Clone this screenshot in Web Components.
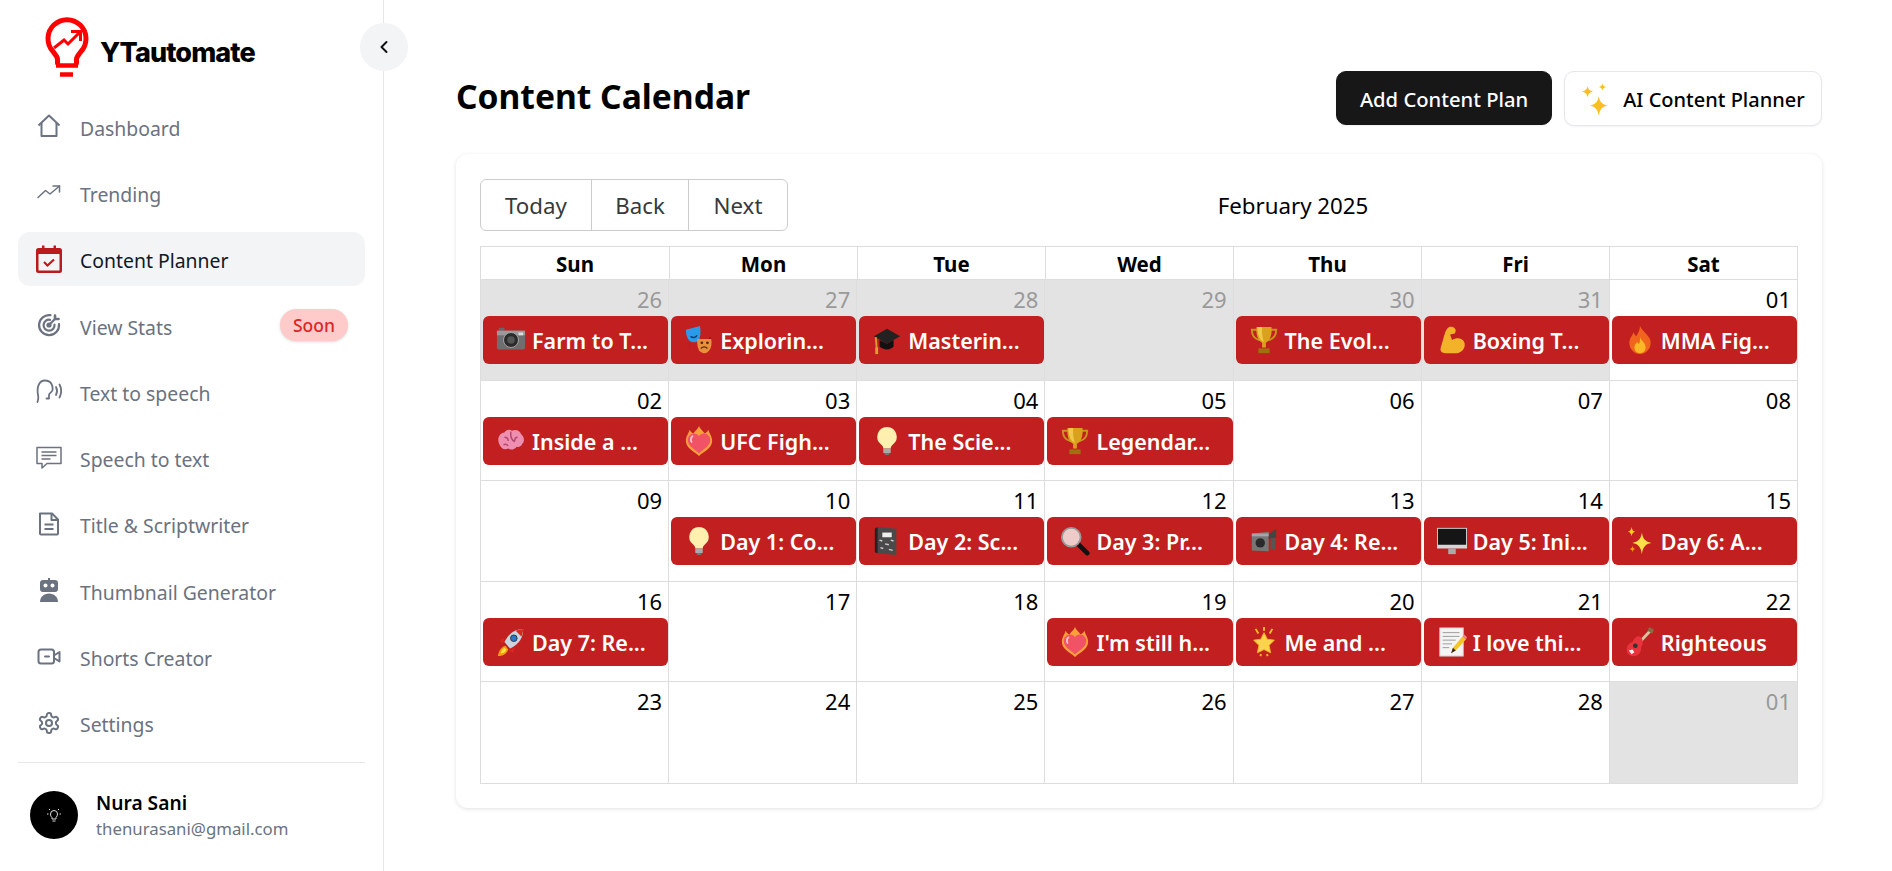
<!DOCTYPE html>
<html>
<head>
<meta charset="utf-8">
<title>Content Calendar</title>
<style>
html, body { margin: 0; height: 100%; background: #fff; }
body { font-family: "Noto Sans", "Open Sans", sans-serif; color: #000; overflow: hidden; }
</style>
</head>
<body>
<yt-app>
  <yt-sidebar slot="side">
    <yt-logo slot="logo">YTautomate</yt-logo>
    <nav-item>
      <svg slot="icon" viewBox="0 0 24 24" width="24" height="24" fill="none" stroke="currentColor" stroke-width="2" stroke-linejoin="round"><path d="M1.500 11.500 12 1.500l10.500 10"/><path d="M4.500 9v13h15V9"/></svg>
      Dashboard
    </nav-item>
    <nav-item>
      <svg slot="icon" viewBox="0 0 24 24" width="24" height="24" fill="none" stroke="currentColor" stroke-width="1.500" stroke-linejoin="round" stroke-linecap="round"><path d="M1 17.500 8.500 10.500l4.500 3.500 9.500-8"/><path d="M16 6h6.500v6"/></svg>
      Trending
    </nav-item>
    <nav-item active>
      <svg slot="icon" viewBox="0 0 26 30" width="26" height="30"><path fill="#b91c1c" d="M2.500 4H6V1.500h2.500V4h9V1.500H20V4h3.500A2.500 2.500 0 0 1 26 6.500v20a2.500 2.500 0 0 1-2.500 2.500h-21A2.500 2.500 0 0 1 0 26.500v-20A2.500 2.500 0 0 1 2.500 4z"/><rect x="2.500" y="10" width="21" height="16.500" rx=".5" fill="#f3f4f6"/><path d="M8 18l3.500 3.500L18 15.500" fill="none" stroke="#b91c1c" stroke-width="2.200"/></svg>
      Content Planner
    </nav-item>
    <nav-item>
      <svg slot="icon" viewBox="0 0 24 24" width="24" height="24" fill="none" stroke="currentColor" stroke-width="2.200" stroke-linecap="round"><path d="M13.500 2.200A10 10 0 1 0 22 11"/><path d="M13 6.800A5.500 5.500 0 1 0 17.500 11.500"/><circle cx="12" cy="12" r="1.500"/><path d="M12 12l6-6"/><path d="M18 2.500v3.500h3.500" stroke-width="2.600"/></svg>
      View Stats
      <soon-badge slot="end">Soon</soon-badge>
    </nav-item>
    <nav-item>
      <svg slot="icon" viewBox="0 0 26 24" width="26" height="24" fill="none" stroke="currentColor" stroke-width="1.800" stroke-linecap="round"><path d="M1.500 23c.5-2.500 1.200-3.500.6-6.500C.6 9 2.500 1.500 9 1.500s8 5.500 7.500 9.500c-.3 2.300-3.500 3-3.500 5v3"/><path d="M13 19.500h-2.500"/><path d="M20 8c1.300 2.500 1.300 5.500 0 8"/><path d="M23.500 5.500c2 3.800 2 9 0 13"/></svg>
      Text to speech
    </nav-item>
    <nav-item>
      <svg slot="icon" viewBox="0 0 26 24" width="26" height="24" fill="none" stroke="currentColor" stroke-width="1.500"><path d="M1 1.500h24v16H11l-5 4.500v-4.500H1z" stroke-linejoin="round"/><path d="M5.500 6h15M5.500 9.500h15M5.500 13h9"/></svg>
      Speech to text
    </nav-item>
    <nav-item>
      <svg slot="icon" viewBox="0 0 24 24" width="24" height="24" fill="none" stroke="currentColor" stroke-width="2" stroke-linejoin="round"><path d="M3 1.500h12l6 6v14a1 1 0 0 1-1 1H4a1 1 0 0 1-1-1z"/><path d="M14.500 1.500v6.500H21"/><path d="M7.500 12.500h9M7.500 17h9"/></svg>
      Title &amp; Scriptwriter
    </nav-item>
    <nav-item>
      <svg slot="icon" viewBox="0 0 24 24" width="24" height="24"><path fill="currentColor" d="M11 0h2v2h5a3 3 0 0 1 3 3v6a3 3 0 0 1-3 3H6a3 3 0 0 1-3-3V5a3 3 0 0 1 3-3h5z"/><circle cx="8.500" cy="7.500" r="2" fill="#fff"/><circle cx="15.500" cy="7.500" r="2" fill="#fff"/><path fill="currentColor" d="M3 24c0-5 4-8.500 9-8.500s9 3.500 9 8.500z"/></svg>
      Thumbnail Generator
    </nav-item>
    <nav-item>
      <svg slot="icon" viewBox="0 0 24 24" width="24" height="24" fill="none" stroke="currentColor" stroke-width="2" stroke-linejoin="round" stroke-linecap="round"><rect x="1.500" y="4.500" width="15.500" height="14" rx="2.500"/><path d="M17 10.500l5.500-3.500v9.500L17 13"/><path d="M8 11.500h4"/></svg>
      Shorts Creator
    </nav-item>
    <nav-item>
      <svg slot="icon" viewBox="0 0 24 24" width="24" height="24" fill="none" stroke="currentColor" stroke-width="2" stroke-linejoin="round" stroke-linecap="round"><path d="M12.220 2h-.44a2 2 0 0 0-2 2v.18a2 2 0 0 1-1 1.730l-.43.250a2 2 0 0 1-2 0l-.15-.08a2 2 0 0 0-2.730.730l-.22.380a2 2 0 0 0 .730 2.730l.15.100a2 2 0 0 1 1 1.720v.51a2 2 0 0 1-1 1.740l-.15.090a2 2 0 0 0-.730 2.730l.22.380a2 2 0 0 0 2.730.730l.15-.08a2 2 0 0 1 2 0l.43.250a2 2 0 0 1 1 1.730V20a2 2 0 0 0 2 2h.44a2 2 0 0 0 2-2v-.18a2 2 0 0 1 1-1.730l.43-.250a2 2 0 0 1 2 0l.15.080a2 2 0 0 0 2.730-.730l.22-.390a2 2 0 0 0-.730-2.730l-.15-.080a2 2 0 0 1-1-1.740v-.5a2 2 0 0 1 1-1.740l.15-.090a2 2 0 0 0 .730-2.730l-.22-.380a2 2 0 0 0-2.730-.730l-.15.080a2 2 0 0 1-2 0l-.43-.250a2 2 0 0 1-1-1.730V4a2 2 0 0 0-2-2z"/><circle cx="12" cy="12" r="3"/></svg>
      Settings
    </nav-item>
    <user-card slot="foot" name="Nura Sani" email="thenurasani@gmail.com"></user-card>
  </yt-sidebar>

  <page-header slot="head" title="Content Calendar">
    <yt-button variant="dark">Add Content Plan</yt-button>
    <yt-button>
      <svg slot="icon" viewBox="0 0 30 36" width="28" height="34" fill="#fbbf24"><path d="M18 10c1 6 4 9 10 10-6 1-9 4-10 11-1-7-4-10-10-11 6-1 9-4 10-10z" transform="translate(1 4)"/><path d="M7 3c.600 3.500 2.200 5.100 6 6-3.800.900-5.400 2.500-6 6-.600-3.500-2.200-5.100-6-6 3.800-.900 5.400-2.500 6-6z"/><path d="M23 0c.400 2.300 1.500 3.400 4 4-2.500.600-3.600 1.700-4 4-.400-2.300-1.500-3.400-4-4 2.500-.600 3.600-1.700 4-4z"/></svg>
      AI Content Planner
    </yt-button>
  </page-header>

  <cal-card slot="main">
    <cal-toolbar slot="toolbar" label="February 2025"></cal-toolbar>
    <cal-month>
      <cal-day n="26" off><cal-event e="camera">Farm to T...</cal-event></cal-day>
      <cal-day n="27" off><cal-event e="masks">Explorin...</cal-event></cal-day>
      <cal-day n="28" off><cal-event e="cap">Masterin...</cal-event></cal-day>
      <cal-day n="29" off></cal-day>
      <cal-day n="30" off><cal-event e="trophy">The Evol...</cal-event></cal-day>
      <cal-day n="31" off><cal-event e="muscle">Boxing T...</cal-event></cal-day>
      <cal-day n="01"><cal-event e="fire">MMA Fig...</cal-event></cal-day>

      <cal-day n="02"><cal-event e="brain">Inside a ...</cal-event></cal-day>
      <cal-day n="03"><cal-event e="heartfire">UFC Figh...</cal-event></cal-day>
      <cal-day n="04"><cal-event e="bulb">The Scie...</cal-event></cal-day>
      <cal-day n="05"><cal-event e="trophy">Legendar...</cal-event></cal-day>
      <cal-day n="06"></cal-day>
      <cal-day n="07"></cal-day>
      <cal-day n="08"></cal-day>

      <cal-day n="09"></cal-day>
      <cal-day n="10"><cal-event e="bulb">Day 1: Co...</cal-event></cal-day>
      <cal-day n="11"><cal-event e="notebook">Day 2: Sc...</cal-event></cal-day>
      <cal-day n="12"><cal-event e="search">Day 3: Pr...</cal-event></cal-day>
      <cal-day n="13"><cal-event e="video">Day 4: Re...</cal-event></cal-day>
      <cal-day n="14"><cal-event e="desktop">Day 5: Ini...</cal-event></cal-day>
      <cal-day n="15"><cal-event e="sparkles">Day 6: A...</cal-event></cal-day>

      <cal-day n="16"><cal-event e="rocket">Day 7: Re...</cal-event></cal-day>
      <cal-day n="17"></cal-day>
      <cal-day n="18"></cal-day>
      <cal-day n="19"><cal-event e="heartfire">I'm still h...</cal-event></cal-day>
      <cal-day n="20"><cal-event e="star">Me and ...</cal-event></cal-day>
      <cal-day n="21"><cal-event e="memo">I love thi...</cal-event></cal-day>
      <cal-day n="22"><cal-event e="guitar">Righteous</cal-event></cal-day>

      <cal-day n="23"></cal-day>
      <cal-day n="24"></cal-day>
      <cal-day n="25"></cal-day>
      <cal-day n="26"></cal-day>
      <cal-day n="27"></cal-day>
      <cal-day n="28"></cal-day>
      <cal-day n="01" off></cal-day>
    </cal-month>
  </cal-card>
</yt-app>

<script>
const tpl = html => {
  const t = document.createElement('template')
  t.innerHTML = html
  return t
}

// base class: clones a template into an open shadow root
class Base extends HTMLElement {
  constructor() {
    super()
    this.attachShadow({ mode: 'open' }).appendChild(this.constructor.template.content.cloneNode(true))
  }
}

class YtApp extends Base {
  static template = tpl(`
  <style>
    :host { display: flex; height: 871px; }
    .page { flex: 1; min-width: 0; padding: 71px 70px 0 72px; }
  </style>
  <slot name="side"></slot>
  <div class="page">
    <slot name="head"></slot>
    <slot name="main"></slot>
  </div>`)
}
customElements.define('yt-app', YtApp)

class YtSidebar extends Base {
  static template = tpl(`
  <style>
    :host { display: flex; flex-direction: column; position: relative; box-sizing: border-box; width: 384px; height: 871px; border-right: 1px solid #e5e7eb; padding: 0 18px; flex: none; }
    .collapse { position: absolute; top: 23px; right: -25px; width: 48px; height: 48px; border-radius: 50%; background: #f3f4f6; display: flex; align-items: center; justify-content: center; }
    nav { display: flex; flex-direction: column; gap: 12px; }
    .foot { margin-top: 12px; border-top: 1px solid #e5e7eb; }
  </style>
  <slot name="logo"></slot>
  <div class="collapse">
    <svg viewBox="0 0 24 24" width="24" height="24" fill="none" stroke="#111" stroke-width="2" stroke-linecap="round" stroke-linejoin="round"><path d="M14.500 7 9.500 12l5 5"/></svg>
  </div>
  <nav><slot></slot></nav>
  <div class="foot"><slot name="foot"></slot></div>`)
}
customElements.define('yt-sidebar', YtSidebar)

class YtLogo extends Base {
  static template = tpl(`
  <style>
    :host { display: flex; align-items: center; height: 99px; padding-left: 27px; box-sizing: border-box; gap: 11px; }
    svg { flex: none; margin-top: -4px; }
    span { font: 800 27px "Inter", "Noto Sans", sans-serif; letter-spacing: -.9px; color: #000; margin-top: 6px; }
  </style>
  <svg viewBox="0 0 44 62" width="44" height="62" fill="none" stroke="#f00">
    <path d="M12.500 45v-3.500c0-3-2-4.500-4.500-8A19 19 0 1 1 36 33.500c-2.500 3.500-4.500 5-4.500 8V45" stroke-width="5" stroke-linecap="round" transform="translate(0 1)"/>
    <path d="M9 31l10-8 4 4 11-11" stroke-width="3"/>
    <path d="M26 14.500h9.500V24" stroke-width="3"/>
    <path d="M11 48.500h22" stroke-width="4.500"/>
    <path d="M15 57.500h13" stroke-width="4.500"/>
  </svg>
  <span><slot></slot></span>`)
}
customElements.define('yt-logo', YtLogo)

class NavItem extends Base {
  static template = tpl(`
  <style>
    :host { display: flex; align-items: center; height: 54.300px; padding: 0 18px; box-sizing: border-box; border-radius: 12px; color: #6b7280; font-size: 19.400px; white-space: nowrap; }
    :host([active]) { background: #f3f4f6; color: #111827; }
    .icon { width: 26px; height: 30px; display: flex; align-items: center; justify-content: center; margin-right: 18px; flex: none; }
    .label { flex: 1; padding-top: 4px; }
  </style>
  <span class="icon"><slot name="icon"></slot></span>
  <span class="label"><slot></slot></span>
  <slot name="end"></slot>`)
}
customElements.define('nav-item', NavItem)

class SoonBadge extends Base {
  static template = tpl(`
  <style>
    :host { display: inline-flex; align-items: center; justify-content: center; height: 32px; width: 68px; margin-right: -1px; border-radius: 16px; background: #fecaca; color: #dc2626; font-size: 17.500px; font-weight: 500; box-shadow: 0 1px 3px rgba(0,0,0,.15); }
  </style>
  <slot></slot>`)
}
customElements.define('soon-badge', SoonBadge)

class UserCard extends Base {
  static template = tpl(`
  <style>
    :host { display: flex; align-items: center; gap: 18px; padding: 26px 12px 0; }
    .avatar { width: 48px; height: 48px; border-radius: 50%; background: #000; display: flex; align-items: center; justify-content: center; flex: none; }
    .name { font-size: 19.200px; font-weight: 600; line-height: 26px; color: #000; padding-top: 1px; }
    .email { font-size: 16.800px; line-height: 25px; color: #6b7280; }
  </style>
  <div class="avatar">
    <svg viewBox="0 0 14 16" width="14" height="16" fill="none" stroke="#ddd" stroke-width="1"><path d="M5 12v-1.500C4 9.500 3.500 8.500 3.500 7a3.500 3.500 0 0 1 7 0c0 1.500-.500 2.500-1.500 3.500V12z"/><path d="M5.500 14h3M0 7h1.500M12.500 7H14M2 2l1 1M12 2l-1 1" /></svg>
  </div>
  <div>
    <div class="name"></div>
    <div class="email"></div>
  </div>`)

  connectedCallback() {
    this.shadowRoot.querySelector('.name').textContent = this.getAttribute('name')
    this.shadowRoot.querySelector('.email').textContent = this.getAttribute('email')
  }
}
customElements.define('user-card', UserCard)

class PageHeader extends Base {
  static template = tpl(`
  <style>
    :host { display: flex; align-items: center; justify-content: space-between; height: 55px; margin-bottom: 28px; }
    h1 { margin: -5px 0 0; font-size: 33.600px; font-weight: 700; color: #000; }
    .actions { display: flex; gap: 12px; align-items: flex-start; }
  </style>
  <h1></h1>
  <div class="actions"><slot></slot></div>`)

  connectedCallback() {
    this.shadowRoot.querySelector('h1').textContent = this.getAttribute('title')
  }
}
customElements.define('page-header', PageHeader)

class YtButton extends Base {
  static template = tpl(`
  <style>
    :host { display: inline-flex; align-items: center; justify-content: center; box-sizing: border-box; height: 55px; width: 258px; gap: 14px; padding-top: 2px; border-radius: 10px; border: 1px solid #e5e7eb; background: #fff; color: #000; font-size: 20px; font-weight: 500; box-shadow: 0 1px 2px rgba(0,0,0,.06); white-space: nowrap; }
    :host([variant="dark"]) { width: 216px; background: #171717; border-color: #171717; color: #fff; font-size: 20.200px; height: 54px; }
  </style>
  <slot name="icon"></slot><slot></slot>`)
}
customElements.define('yt-button', YtButton)

class CalCard extends Base {
  static template = tpl(`
  <style>
    :host { display: block; background: #fff; border-radius: 12px; padding: 25px 24px; box-shadow: 0 1px 4px rgba(0,0,0,.12); height: 654px; box-sizing: border-box; }
  </style>
  <slot name="toolbar"></slot>
  <slot></slot>`)
}
customElements.define('cal-card', CalCard)

class CalToolbar extends Base {
  static template = tpl(`
  <style>
    :host { display: flex; align-items: center; height: 52px; margin-bottom: 15px; }
    .group { display: flex; flex: none; height: 52px; box-sizing: border-box; border: 1px solid #ccc; border-radius: 6px; color: #373a3c; font-size: 22.300px; }
    .group span { display: flex; align-items: center; justify-content: center; padding-top: 1px; }
    .group span + span { border-left: 1px solid #ccc; }
    .label { flex: 1; text-align: center; font-size: 22.300px; color: #000; padding-top: 1px; }
  </style>
  <div class="group"><span style="width:110px">Today</span><span style="width:96px">Back</span><span style="width:98px">Next</span></div>
  <div class="label"></div>`)

  connectedCallback() {
    this.shadowRoot.querySelector('.label').textContent = this.getAttribute('label')
  }
}
customElements.define('cal-toolbar', CalToolbar)

class CalMonth extends Base {
  static template = tpl(`
  <style>
    :host { display: block; }
    .grid { display: grid; grid-template-columns: repeat(7, 1fr); grid-auto-rows: 100.600px; border-right: 1px solid #ddd; border-bottom: 1px solid #ddd; box-sizing: border-box; }
    .heads { display: grid; grid-template-columns: repeat(7, 1fr); height: 34px; border: 1px solid #ddd; box-sizing: border-box; font-weight: 700; font-size: 20.500px; }
    .heads div { display: flex; align-items: center; justify-content: center; color: #000; padding-top: 1px; }
    .heads div + div { border-left: 1px solid #ddd; }
  </style>
  <div class="heads"><div>Sun</div><div>Mon</div><div>Tue</div><div>Wed</div><div>Thu</div><div>Fri</div><div>Sat</div></div>
  <div class="grid"><slot></slot></div>`)
}
customElements.define('cal-month', CalMonth)

class CalDay extends Base {
  static template = tpl(`
  <style>
    :host { display: block; box-sizing: border-box; min-width: 0; border-bottom: 1px solid #ddd; border-left: 1px solid #ddd; background: #fff; padding-top: 3px; font-size: 22px; color: #000; }
    :host([off]) { background: #e3e3e3; color: #999; }
    :host(:nth-last-child(-n+7)) { border-bottom: 0; }
    .n { text-align: right; padding-right: 6px; height: 33px; line-height: 32px; }
  </style>
  <div class="n"></div>
  <slot></slot>`)

  connectedCallback() {
    this.shadowRoot.querySelector('.n').textContent = this.getAttribute('n')
  }
}
customElements.define('cal-day', CalDay)

// small colour pictures standing in for the emoji in event titles
const EMOJI = {
  camera: '<rect x="3" y="3" width="6" height="3" fill="#666"/><rect x="1" y="6" width="30" height="20" rx="2" fill="#6e6e6e"/><rect x="1" y="6" width="30" height="5" fill="#9a9a9a"/><circle cx="16" cy="16" r="8" fill="#2b2b2b" stroke="#aaa"/><circle cx="16" cy="16" r="4" fill="#555"/><rect x="24" y="8" width="5" height="3" fill="#ddd"/>',
  masks: '<path d="M6 28 5 12l2-2z" fill="#c01818"/><path d="M27 26l2-12-2-2z" fill="#a01010"/><path d="M2 5 17 1c1 6 1 12-2 16-3 2-8 2-10-1C3 13 2 9 2 5z" fill="#2a9be8"/><path d="M7 12c2 2 5 2 7-1" stroke="#0b3c70" stroke-width="1.500" fill="none"/><path d="M14 15l15 0c1 6 0 11-4 14-3 2-7 1-9-2-2-4-2-8-2-12z" fill="#e8903a"/><path d="M18 25c2-2 5-2 7 0" stroke="#5b2c08" stroke-width="1.500" fill="none"/><circle cx="19" cy="19" r="1.500" fill="#5b2c08"/><circle cx="25" cy="19" r="1.500" fill="#5b2c08"/>',
  cap: '<path d="M2 12 16 4l14 8-14 8z" fill="#222"/><path d="M8 16v7c4 4 12 4 15 0v-7l-7 4z" fill="#111"/><path d="M4 13l1 12" stroke="#d99a2a" stroke-width="2"/><rect x="3.500" y="24" width="3" height="7" fill="#e0a030"/>',
  trophy: '<path d="M3 5h26c0 7-4 10-8 11H11C7 15 3 12 3 5z" fill="none" stroke="#c8951a" stroke-width="2"/><path d="M8 2h16c1 9-2 15-6 17v5h-4v-5C10 17 7 11 8 2z" fill="#d9a11c"/><path d="M9 2h5c0 7 0 11 2 16-5-2-7-9-7-16z" fill="#f1c94a"/><rect x="10" y="25" width="12" height="5" fill="#a06f10"/>',
  muscle: '<path d="M13 2c4-1 7 1 7 4l-1 3-5 1 2 6c5-3 11-2 13 2 2 5-1 11-8 12H9c-4 0-6-2-5-6l4-14c1-4 3-7 5-8z" fill="#f2b32a"/>',
  fire: '<path d="M16 1c2 5 9 9 11 15 2 8-4 15-11 15S3 24 5 16c1-3 3-5 4-8 1 2 2 3 3 4 2-3 4-7 4-11z" fill="#f0641e"/><path d="M16 13c1 3 6 6 6 11 0 4-3 6-6 6s-6-2-6-6c0-3 2-5 3-6 1 1 1 2 2 2 1-2 1-4 1-7z" fill="#fbb826"/>',
  brain: '<path d="M3 18C1 12 5 7 9 7c1-3 6-4 8-2 4-2 9 0 10 4 3 2 4 7 1 10-1 3-4 4-6 3-2 3-6 4-9 2-4 2-8 0-10-6z" fill="#ee8fb0"/><path d="M9 12c3 0 4 2 4 4M16 6c-1 5 1 9 4 11M23 12c-2 0-3 2-3 4M8 20c2-1 4 0 5 1" fill="none" stroke="#b8456f" stroke-width="1.500"/>',
  heartfire: '<path d="M16 0c1 3 4 5 6 8 2-1 3-2 4-4 1 4 4 7 4 12 0 8-9 11-14 16C11 27 2 24 2 16c0-5 3-8 4-12 1 2 2 3 4 4 2-3 5-5 6-8z" fill="#f9a03a"/><path d="M16 29C11 25 4 21 4 15c0-4 3-7 7-7 2 0 4 1 5 3 1-2 3-3 5-3 4 0 7 3 7 7 0 6-7 10-12 14z" fill="#f25265"/><path d="M9 11c-2 1-2 4-1 6" stroke="#ffc0c8" stroke-width="2" fill="none" stroke-linecap="round"/>',
  bulb: '<path d="M16 1a10.500 10.500 0 0 0-6 19c1 1 2 2 2 4h8c0-2 1-3 2-4a10.500 10.500 0 0 0-6-19z" fill="#fff0b0"/><rect x="12" y="24" width="8" height="5" rx="1" fill="#aaa"/><rect x="14" y="29" width="4" height="2" fill="#777"/>',
  notebook: '<path d="M6 1l20 2v28l-20-2z" fill="#4a4a4a"/><path d="M6 1v28l-3-1V3z" fill="#222"/><rect x="11" y="7" width="10" height="5" fill="#eee"/><path d="M8 15l3 1M14 19l4 1M20 15l3 1M9 23l3 1M18 25l4 1" stroke="#ccc" stroke-width="1.500"/>',
  search: '<path d="M18 18 29 29" stroke="#111" stroke-width="5" stroke-linecap="round"/><circle cx="12" cy="12" r="10" fill="#eecbc8" stroke="#999" stroke-width="2"/>',
  video: '<path d="M3 8 21 6v21l-18-1z" fill="#777"/><path d="M21 9l8-6v9l-8 2z" fill="#444"/><circle cx="12" cy="18" r="5" fill="#2a2a2a"/><rect x="3" y="8" width="18" height="3" fill="#a5a5a5"/><rect x="23" y="13" width="5" height="12" fill="#555"/>',
  desktop: '<rect x="0" y="2" width="32" height="22" fill="#d6d6d6"/><rect x="1" y="3" width="30" height="17" fill="#151515"/><rect x="12" y="24" width="8" height="6" fill="#aaa"/>',
  sparkles: '<path d="M18 7c1 7 4 10 10 11-6 1-9 4-10 12-1-8-4-11-10-12 6-1 9-4 10-11z" fill="#fde047"/><path d="M7 1c.500 3 1.500 4.500 4 5-2.500.500-3.500 2-4 5-.500-3-1.500-4.500-4-5 2.500-.500 3.500-2 4-5z" fill="#facc15"/><path d="M8 21c.400 2 1 3 3 3.500-2 .500-2.600 1.500-3 3.500-.400-2-1-3-3-3.500 2-.500 2.600-1.500 3-3.500z" fill="#f59e0b"/>',
  rocket: '<path d="M10 20c-4 1-7 5-8 11 5 0 9-2 11-7z" fill="#f59e0b"/><path d="M9 22c-2 1-3 3-4 6 3 0 5-1 6-4z" fill="#fde047"/><path d="M9 12l-5 2 3 4zM20 22l-2 6-4-3z" fill="#d8281e"/><path d="M29 2c-8 0-15 4-20 14l6 7c10-5 14-12 14-21z" fill="#c9d4de"/><path d="M29 2c-3 0-6 1-8 2l6 6c1-2 2-5 2-8z" fill="#d8281e"/><circle cx="19" cy="12" r="3.500" fill="#2a77c9" stroke="#333"/>',
  star: '<path d="M16 6l3.500 7 7.500 1-5.500 5.500 1.500 8L16 24l-7 3.500 1.500-8L5 14l7.500-1z" fill="#fcd34d" stroke="#f5b01e"/><path d="M7 2l3 5M25 2l-3 5M16 0v4M13 29l-1 2M19 29l1 2" stroke="#fbbf24" stroke-width="2"/>',
  memo: '<rect x="3" y="1" width="25" height="30" fill="#f4f4f4" stroke="#ccc"/><path d="M6 6h18M6 10h18M6 14h14M6 18h10M6 22h7" stroke="#999"/><path d="M15 28l2-6L27 10l4 3-11 12z" fill="#f5c32c"/><path d="M15 28l2-6 3 3z" fill="#3a2a1a"/><path d="M27 10l4 3 1-2-3-3z" fill="#e88"/>',
  guitar: '<path d="M13 19 28 3" stroke="#d9c4a0" stroke-width="3"/><path d="M26 0l5 3-2 4-5-3z" fill="#8a6a40"/><path d="M13 10c3-1 6 2 6 6 0 3-1 4-2 6 1 4-3 9-8 9s-8-4-7-9c1-4 4-5 6-6 1-3 3-5 5-6z" fill="#e8323c"/><circle cx="11" cy="20" r="2.500" fill="#333"/><path d="M4 25l4-1 2 3-3 2z" fill="#f5f5f5"/>'
}

class CalEvent extends Base {
  static template = tpl(`
  <style>
    :host { display: flex; align-items: center; box-sizing: border-box; height: 48px; margin-left: 2px; padding-left: 13px; border-radius: 6px; background: #c22020; color: #fff; font-size: 21.500px; font-weight: 600; white-space: nowrap; overflow: hidden; }
    svg { width: 30px; height: 32px; flex: none; margin-right: 6px; }
    span { padding-top: 1px; }
  </style>
  <svg viewBox="0 0 32 32"></svg><span><slot></slot></span>`)

  connectedCallback() {
    this.shadowRoot.querySelector('svg').innerHTML = EMOJI[this.getAttribute('e')] || ''
  }
}
customElements.define('cal-event', CalEvent)
</script>
</body>
</html>
